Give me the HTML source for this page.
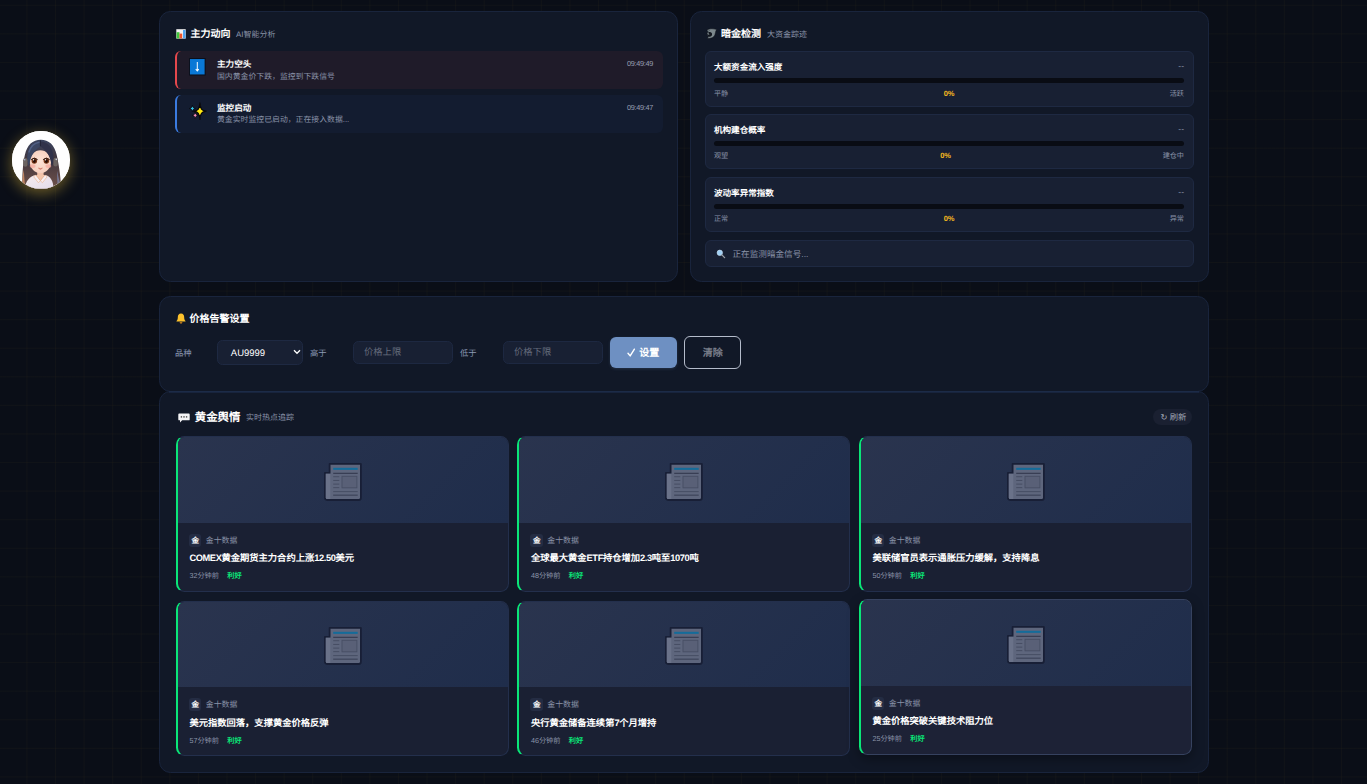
<!DOCTYPE html>
<html lang="zh-CN">
<head>
<meta charset="utf-8">
<title>Gold Monitor</title>
<style>
*{box-sizing:border-box;margin:0;padding:0}
html,body{width:1367px;height:784px;overflow:hidden}
body{
  font-family:"Liberation Sans",sans-serif;
  background-color:#0a0e17;
  background-image:
    linear-gradient(to right,rgba(255,215,60,0.028) 0.9px,transparent 0.9px),
    linear-gradient(to bottom,rgba(255,215,60,0.028) 0.9px,transparent 0.9px);
  background-size:28.592px 28.592px;
  background-position:26.45px 4.8px;
  color:#fff;position:relative;text-rendering:geometricPrecision;
}
.abs{position:absolute}
.panel{position:absolute;background:#111827;border:1px solid #19243c;border-radius:11.5px}
.ptitle{position:absolute;font-weight:700;font-size:10px;line-height:12px;color:#fff;white-space:nowrap}
.psub{position:absolute;font-size:8px;line-height:10px;color:#8a93a8;white-space:nowrap}
.t{position:absolute;white-space:nowrap}
.num{letter-spacing:-0.3px}
.lt{letter-spacing:-0.4px}
</style>
</head>
<body>

<!-- Panel 1 -->
<div class="panel" style="left:159px;top:11px;width:519px;height:271px"></div>
<svg class="abs" style="left:176px;top:28.7px" width="10" height="10" viewBox="0 0 10 10"><rect x="0.3" y="0.2" width="9.4" height="9.4" fill="#f3f3f3"/><rect x="0.6" y="3.2" width="2.9" height="6.2" fill="#3fc63f"/><rect x="3.5" y="4.6" width="2.7" height="4.8" fill="#f0562e"/><rect x="7" y="1" width="2.4" height="8.4" fill="#4da3f0"/></svg>
<div class="ptitle" style="left:190.5px;top:29px">主力动向</div>
<div class="psub" style="left:236px;top:29.5px">AI智能分析</div>

<div class="abs" style="left:175px;top:51px;width:488px;height:37.5px;background:#1f1b29;border-left:2px solid #e5484d;border-radius:6px"></div>
<svg class="abs" style="left:189.2px;top:58.3px" width="16.6" height="17.5" viewBox="0 0 17 17" preserveAspectRatio="none"><rect x="0" y="0" width="17" height="17" fill="#0b0f1a"/><rect x="1" y="1" width="15" height="15" fill="#0a78d6"/><path d="M8.5 4 V12.3 M6.9 10.9 L8.5 12.6 L10.1 10.9" stroke="#fff" stroke-width="1" fill="none"/></svg>
<div class="t" style="left:217px;top:59.4px;font-size:8.6px;line-height:11px;font-weight:700;color:#fff">主力空头</div>
<div class="t" style="left:217px;top:71.6px;font-size:7.86px;line-height:10px;color:#8a93a8">国内黄金价下跌，监控到下跌信号</div>
<div class="t num" style="right:714px;top:59px;font-size:7.3px;line-height:9px;color:#959db0">09:49:49</div>

<div class="abs" style="left:175px;top:94.5px;width:488px;height:38.5px;background:#131c30;border-left:2px solid #3b7be0;border-radius:6px"></div>
<svg class="abs" style="left:188.5px;top:102px" width="18" height="18" viewBox="0 0 18 18"><path d="M3.4 3.20 C3.71 5.38 4.45 6.17 6.50 6.5 C4.45 6.83 3.71 7.62 3.4 9.80 C3.09 7.62 2.35 6.83 0.30 6.5 C2.35 6.17 3.09 5.38 3.4 3.20Z" fill="#35c4e8" stroke="#08080c" stroke-width="0.8" stroke-linejoin="round"/><path d="M6.2 10.10 C6.51 12.28 7.25 13.07 9.30 13.4 C7.25 13.73 6.51 14.52 6.2 16.70 C5.89 14.52 5.15 13.73 3.10 13.4 C5.15 13.07 5.89 12.28 6.2 10.10Z" fill="#f08cb8" stroke="#08080c" stroke-width="0.8" stroke-linejoin="round"/><path d="M10.9 0.90 C11.27 6.71 12.76 8.70 17.10 9.2 C12.76 9.70 11.27 11.69 10.9 17.50 C10.53 11.69 9.04 9.70 4.70 9.2 C9.04 8.70 10.53 6.71 10.9 0.90Z" fill="#ffe812" stroke="#08080c" stroke-width="1.2" stroke-linejoin="round"/></svg>
<div class="t" style="left:217px;top:102.9px;font-size:8.6px;line-height:11px;font-weight:700;color:#fff">监控启动</div>
<div class="t" style="left:217px;top:114.9px;font-size:7.86px;line-height:10px;color:#8a93a8">黄金实时监控已启动，正在接入数据...</div>
<div class="t num" style="right:714px;top:102.5px;font-size:7.3px;line-height:9px;color:#959db0">09:49:47</div>

<!-- Panel 2 -->
<div class="panel" style="left:690px;top:11px;width:519px;height:271px"></div>
<svg class="abs" style="left:706px;top:27.5px" width="11" height="11.5" viewBox="0 0 11 11.5"><path d="M0.9 2.2 C2.5 0.9 5 0.5 7 0.8 C8.5 1 9.8 1.3 10.6 1.6 C10 2.6 9.6 3.6 9.4 4.7 C9.1 7.1 7.9 9 6.1 9.8 C4.6 10.4 3 10.6 1.6 10.5 C1.6 9.7 1.9 9.2 2.4 8.9 C1.8 8.2 1.5 7.3 1.6 6.4 C1.2 6 1 5.6 0.9 5.1 C1.4 4.7 1.9 4.4 2.5 4.2 C1.9 3.6 1.3 2.9 0.9 2.2Z" fill="#7c888d" stroke="#0c0f16" stroke-width="0.5" stroke-linejoin="round"/><path d="M2.5 4.3 C3.6 3.9 5 4.1 5.7 5 C6.4 6 6.1 7.600 5 8.300 C4.2 8.800 3.2 8.900 2.4 8.800 C1.8 8.100 1.600 7.300 1.700 6.400 C2.300 6.800 3 6.900 3.600 6.600 C3 6.200 2.500 5.400 2.500 4.300Z" fill="#12161e"/><circle cx="3.1" cy="2.6" r="0.45" fill="#1a1e26"/></svg>
<div class="ptitle" style="left:721px;top:29.1px">暗金检测</div>
<div class="psub" style="left:767px;top:29.5px">大资金踪迹</div>

<div class="abs" style="left:705px;top:51.4px;width:488.5px;height:55.2px;background:#182033;border:1px solid #1e2942;border-radius:6px"></div>
<div class="t" style="left:714px;top:61.7px;font-size:8.55px;line-height:11px;font-weight:700;color:#fff">大额资金流入强度</div>
<div class="t" style="right:183px;top:60.6px;font-size:8.6px;line-height:11px;color:#8a93a8">--</div>
<div class="abs" style="left:714px;top:77.7px;width:470px;height:5.5px;background:#090c14;border-radius:3px"></div>
<div class="t" style="left:714px;top:88.5px;font-size:7.14px;line-height:10px;color:#8a93a8">平静</div>
<div class="t num" style="left:943.8px;top:88.5px;font-size:7.5px;line-height:10px;color:#f5b91f;font-weight:700">0%</div>
<div class="t" style="right:183px;top:88.5px;font-size:7.14px;line-height:10px;color:#8a93a8">活跃</div>

<div class="abs" style="left:705px;top:114.3px;width:488.5px;height:55.2px;background:#182033;border:1px solid #1e2942;border-radius:6px"></div>
<div class="t" style="left:714px;top:124.6px;font-size:8.55px;line-height:11px;font-weight:700;color:#fff">机构建仓概率</div>
<div class="t" style="right:183px;top:123.5px;font-size:8.6px;line-height:11px;color:#8a93a8">--</div>
<div class="abs" style="left:714px;top:140.6px;width:470px;height:5.5px;background:#090c14;border-radius:3px"></div>
<div class="t" style="left:714px;top:151.4px;font-size:7.14px;line-height:10px;color:#8a93a8">观望</div>
<div class="t num" style="left:940.3px;top:151.4px;font-size:7.5px;line-height:10px;color:#f5b91f;font-weight:700">0%</div>
<div class="t" style="right:183px;top:151.4px;font-size:7.14px;line-height:10px;color:#8a93a8">建仓中</div>

<div class="abs" style="left:705px;top:177.3px;width:488.5px;height:55.2px;background:#182033;border:1px solid #1e2942;border-radius:6px"></div>
<div class="t" style="left:714px;top:187.6px;font-size:8.55px;line-height:11px;font-weight:700;color:#fff">波动率异常指数</div>
<div class="t" style="right:183px;top:186.5px;font-size:8.6px;line-height:11px;color:#8a93a8">--</div>
<div class="abs" style="left:714px;top:203.6px;width:470px;height:5.5px;background:#090c14;border-radius:3px"></div>
<div class="t" style="left:714px;top:214.4px;font-size:7.14px;line-height:10px;color:#8a93a8">正常</div>
<div class="t num" style="left:943.8px;top:214.4px;font-size:7.5px;line-height:10px;color:#f5b91f;font-weight:700">0%</div>
<div class="t" style="right:183px;top:214.4px;font-size:7.14px;line-height:10px;color:#8a93a8">异常</div>

<div class="abs" style="left:705px;top:240.4px;width:488.5px;height:26.5px;background:#182033;border:1px solid #1e2942;border-radius:6px"></div>
<svg class="abs" style="left:716px;top:248.5px" width="10" height="10" viewBox="0 0 10 10"><circle cx="3.8" cy="3.8" r="2.7" fill="#9fd0f5" stroke="#cfe6f8" stroke-width="0.6"/><path d="M5.9 5.9 L8.6 8.6" stroke="#9aa0a8" stroke-width="1.3" stroke-linecap="round"/></svg>
<div class="t" style="left:732.5px;top:248.5px;font-size:8.6px;line-height:11px;color:#8a93a8">正在监测暗金信号...</div>

<!-- Panel 3 -->
<div class="panel" style="left:159px;top:296px;width:1050px;height:96px"></div>
<svg class="abs" style="left:176px;top:313px" width="10" height="11" viewBox="0 0 10 11"><path d="M5 0.6 C7.3 0.6 8.2 2.4 8.2 4.4 C8.2 6.4 8.8 7.2 9.5 7.9 L9.5 8.6 L0.5 8.6 L0.5 7.9 C1.2 7.2 1.8 6.4 1.8 4.4 C1.8 2.4 2.7 0.6 5 0.6Z" fill="#fcc12c"/><path d="M3.6 9.2 H6.4 C6.3 10.1 5.7 10.5 5 10.5 C4.3 10.5 3.7 10.1 3.6 9.2Z" fill="#e8901a"/></svg>
<div class="ptitle" style="left:189.5px;top:313.5px">价格告警设置</div>

<div class="t" style="left:175px;top:348.4px;font-size:8.3px;line-height:10px;color:#8d9ab5">品种</div>
<div class="abs" style="left:217px;top:340px;width:86px;height:24.5px;background:#182033;border:1px solid #1e2942;border-radius:5.5px"></div>
<div class="t" style="left:230.8px;top:347.5px;font-size:9.5px;line-height:12px;color:#fff">AU9999</div>
<svg class="abs" style="left:292.5px;top:349px" width="8" height="6" viewBox="0 0 8 6"><path d="M1 1.2 L4 4.3 L7 1.2" stroke="#fff" stroke-width="1.3" fill="none"/></svg>
<div class="t" style="left:310px;top:348.4px;font-size:8.3px;line-height:10px;color:#8d9ab5">高于</div>
<div class="abs" style="left:353px;top:340.5px;width:100px;height:23.5px;background:#182033;border:1px solid #1d2841;border-radius:5.5px"></div>
<div class="t" style="left:364px;top:347.4px;font-size:9.3px;line-height:11px;color:#666d7d">价格上限</div>
<div class="t" style="left:460px;top:348.4px;font-size:8.3px;line-height:10px;color:#8d9ab5">低于</div>
<div class="abs" style="left:503px;top:340.5px;width:100px;height:23.5px;background:#182033;border:1px solid #1d2841;border-radius:5.5px"></div>
<div class="t" style="left:514px;top:347.4px;font-size:9.3px;line-height:11px;color:#666d7d">价格下限</div>
<div class="abs" style="left:610.3px;top:337px;width:66.7px;height:30.5px;background:#6e90c2;border-radius:6px;box-shadow:0 1px 3px rgba(110,144,194,0.22)"></div>
<svg class="abs" style="left:627.3px;top:348.3px" width="8.6" height="9.4" viewBox="0 0 9 10"><path d="M1 5.6 L3.3 8.4 L7.8 1.2" stroke="#fff" stroke-width="1.5" fill="none" stroke-linecap="round" stroke-linejoin="round"/></svg>
<div class="t" style="left:639.2px;top:347.5px;font-size:10px;line-height:12px;font-weight:700;color:#fff">设置</div>
<div class="abs" style="left:684px;top:336px;width:57px;height:33px;border:1px solid #b5bccb;border-radius:6px"></div>
<div class="t" style="left:702.7px;top:347.6px;font-size:10px;line-height:12px;color:#777c88;font-weight:700">清除</div>

<!-- Panel 4 -->
<div class="panel" style="left:159px;top:391px;width:1050px;height:382px"></div>
<svg class="abs" style="left:169px;top:390px" width="1030" height="4" viewBox="0 0 1030 4"><rect x="0" y="1.2" width="1030" height="1.4" fill="#1e2d4c"/></svg>
<svg class="abs" style="left:177.5px;top:412.5px" width="12" height="10" viewBox="0 0 12 10"><path d="M1.2 0.5 H10.8 C11.4 0.5 11.7 0.9 11.7 1.4 V6.4 C11.7 6.9 11.4 7.3 10.8 7.3 H4.2 L2 9.4 V7.3 H1.2 C0.6 7.3 0.3 6.9 0.3 6.4 V1.4 C0.3 0.9 0.6 0.5 1.2 0.5Z" fill="#f4f4f6"/><circle cx="3.4" cy="3.9" r="0.8" fill="#555"/><circle cx="6" cy="3.9" r="0.8" fill="#555"/><circle cx="8.6" cy="3.9" r="0.8" fill="#555"/></svg>
<div class="t" style="left:194.8px;top:411.2px;font-size:11.4px;line-height:15px;font-weight:700;color:#fff">黄金舆情</div>
<div class="psub" style="left:246px;top:413.2px">实时热点追踪</div>
<div class="abs" style="left:1153.3px;top:408.8px;width:38.6px;height:16.2px;background:#1a2031;border-radius:9px"></div>
<div class="t" style="left:1160.4px;top:412.3px;font-size:8.3px;line-height:10px;color:#a2a9b8">↻ 刷新</div>

<div class="abs" style="left:175.8px;top:436.4px;width:333.1px;height:155.3px;background:#1a2033;border:1px solid #232f4c;border-left:2px solid #0ae678;border-radius:8.5px;overflow:hidden">
  <div class="abs" style="left:0;top:0;width:100%;height:85.6px;background:linear-gradient(135deg,#2a344e 0%,#1f2d4b 100%)"></div>
  <svg class="abs" style="left:146.2px;top:25.4px" width="37.8" height="37.9" viewBox="0 0 37.8 37.1" preserveAspectRatio="none"><path d="M5.6 0.9 H36.9 V34 Q36.9 36.2 34.7 36.2 H3.1 Q0.9 36.2 0.9 34 V9.7 H5.6 Z" fill="#5e667d" stroke="#181f36" stroke-width="1.8" stroke-linejoin="round"/><path d="M1.8 10.600 H6.3 V35.3 H3.1 Q1.8 35.3 1.8 34 Z" fill="#6a7289"/><rect x="9.2" y="4.7" width="24.5" height="2" fill="#146c9a"/><rect x="9.2" y="9.6" width="24.5" height="0.9" fill="#2a3046"/><rect x="18" y="13" width="14.9" height="11.3" fill="#596077" stroke="#474e64" stroke-width="0.9"/><rect x="9.2" y="13" width="6.1" height="0.9" fill="#444b61"/><rect x="9.2" y="16.6" width="6.1" height="0.9" fill="#444b61"/><rect x="9.2" y="20.2" width="6.1" height="0.9" fill="#444b61"/><rect x="9.2" y="23.700" width="6.100" height="0.9" fill="#444b61"/><rect x="9.2" y="27.6" width="24.500" height="0.900" fill="#444b61"/><rect x="9.2" y="30.8" width="24.500" height="1.500" fill="#444b61"/></svg>
  <div class="abs" style="left:11.1px;top:96.7px;width:12.6px;height:12.6px;border-radius:3px;background:#242c43"></div>
  <div class="t" style="left:13.6px;top:98.7px;font-size:7.6px;line-height:9px;color:#fff;font-weight:700">金</div>
  <div class="t" style="left:28px;top:98.700px;font-size:7.9px;line-height:10px;color:#8a93a8">金十数据</div>
  <div class="t" style="left:11.6px;top:115px;font-size:9.29px;line-height:12px;color:#fff;font-weight:700"><span class="lt">COMEX</span>黄金期货主力合约上涨<span class="lt">12.50</span>美元</div>
  <div class="t" style="left:11.6px;top:134px;font-size:7.2px;line-height:9px;color:#8a93a8">32分钟前</div>
  <div class="t" style="left:49.5px;top:134px;font-size:7.2px;line-height:9px;color:#0ae678;font-weight:700">利好</div>
</div>
<div class="abs" style="left:517.3px;top:436.4px;width:333.1px;height:155.3px;background:#1a2033;border:1px solid #232f4c;border-left:2px solid #0ae678;border-radius:8.5px;overflow:hidden">
  <div class="abs" style="left:0;top:0;width:100%;height:85.6px;background:linear-gradient(135deg,#2a344e 0%,#1f2d4b 100%)"></div>
  <svg class="abs" style="left:146.2px;top:25.4px" width="37.8" height="37.9" viewBox="0 0 37.8 37.1" preserveAspectRatio="none"><path d="M5.6 0.9 H36.9 V34 Q36.9 36.2 34.7 36.2 H3.1 Q0.9 36.2 0.9 34 V9.7 H5.6 Z" fill="#5e667d" stroke="#181f36" stroke-width="1.8" stroke-linejoin="round"/><path d="M1.8 10.600 H6.3 V35.3 H3.1 Q1.8 35.3 1.8 34 Z" fill="#6a7289"/><rect x="9.2" y="4.7" width="24.5" height="2" fill="#146c9a"/><rect x="9.2" y="9.6" width="24.5" height="0.9" fill="#2a3046"/><rect x="18" y="13" width="14.9" height="11.3" fill="#596077" stroke="#474e64" stroke-width="0.9"/><rect x="9.2" y="13" width="6.1" height="0.9" fill="#444b61"/><rect x="9.2" y="16.6" width="6.1" height="0.9" fill="#444b61"/><rect x="9.2" y="20.2" width="6.1" height="0.9" fill="#444b61"/><rect x="9.2" y="23.700" width="6.100" height="0.9" fill="#444b61"/><rect x="9.2" y="27.6" width="24.500" height="0.900" fill="#444b61"/><rect x="9.2" y="30.8" width="24.500" height="1.500" fill="#444b61"/></svg>
  <div class="abs" style="left:11.1px;top:96.7px;width:12.6px;height:12.6px;border-radius:3px;background:#242c43"></div>
  <div class="t" style="left:13.6px;top:98.7px;font-size:7.6px;line-height:9px;color:#fff;font-weight:700">金</div>
  <div class="t" style="left:28px;top:98.700px;font-size:7.9px;line-height:10px;color:#8a93a8">金十数据</div>
  <div class="t" style="left:11.6px;top:115px;font-size:9.29px;line-height:12px;color:#fff;font-weight:700">全球最大黄金<span class="lt">ETF</span>持仓增加<span class="lt">2.3</span>吨至<span class="lt">1070</span>吨</div>
  <div class="t" style="left:11.6px;top:134px;font-size:7.2px;line-height:9px;color:#8a93a8">48分钟前</div>
  <div class="t" style="left:49.5px;top:134px;font-size:7.2px;line-height:9px;color:#0ae678;font-weight:700">利好</div>
</div>
<div class="abs" style="left:858.8px;top:436.4px;width:333.1px;height:155.3px;background:#1a2033;border:1px solid #232f4c;border-left:2px solid #0ae678;border-radius:8.5px;overflow:hidden">
  <div class="abs" style="left:0;top:0;width:100%;height:85.6px;background:linear-gradient(135deg,#2a344e 0%,#1f2d4b 100%)"></div>
  <svg class="abs" style="left:146.2px;top:25.4px" width="37.8" height="37.9" viewBox="0 0 37.8 37.1" preserveAspectRatio="none"><path d="M5.6 0.9 H36.9 V34 Q36.9 36.2 34.7 36.2 H3.1 Q0.9 36.2 0.9 34 V9.7 H5.6 Z" fill="#5e667d" stroke="#181f36" stroke-width="1.8" stroke-linejoin="round"/><path d="M1.8 10.600 H6.3 V35.3 H3.1 Q1.8 35.3 1.8 34 Z" fill="#6a7289"/><rect x="9.2" y="4.7" width="24.5" height="2" fill="#146c9a"/><rect x="9.2" y="9.6" width="24.5" height="0.9" fill="#2a3046"/><rect x="18" y="13" width="14.9" height="11.3" fill="#596077" stroke="#474e64" stroke-width="0.9"/><rect x="9.2" y="13" width="6.1" height="0.9" fill="#444b61"/><rect x="9.2" y="16.6" width="6.1" height="0.9" fill="#444b61"/><rect x="9.2" y="20.2" width="6.1" height="0.9" fill="#444b61"/><rect x="9.2" y="23.700" width="6.100" height="0.9" fill="#444b61"/><rect x="9.2" y="27.6" width="24.500" height="0.900" fill="#444b61"/><rect x="9.2" y="30.8" width="24.500" height="1.500" fill="#444b61"/></svg>
  <div class="abs" style="left:11.1px;top:96.7px;width:12.6px;height:12.6px;border-radius:3px;background:#242c43"></div>
  <div class="t" style="left:13.6px;top:98.7px;font-size:7.6px;line-height:9px;color:#fff;font-weight:700">金</div>
  <div class="t" style="left:28px;top:98.700px;font-size:7.9px;line-height:10px;color:#8a93a8">金十数据</div>
  <div class="t" style="left:11.6px;top:115px;font-size:9.29px;line-height:12px;color:#fff;font-weight:700">美联储官员表示通胀压力缓解，支持降息</div>
  <div class="t" style="left:11.6px;top:134px;font-size:7.2px;line-height:9px;color:#8a93a8">50分钟前</div>
  <div class="t" style="left:49.5px;top:134px;font-size:7.2px;line-height:9px;color:#0ae678;font-weight:700">利好</div>
</div>
<div class="abs" style="left:175.8px;top:600.8px;width:333.1px;height:155.3px;background:#1a2033;border:1px solid #232f4c;border-left:2px solid #0ae678;border-radius:8.5px;overflow:hidden">
  <div class="abs" style="left:0;top:0;width:100%;height:85.6px;background:linear-gradient(135deg,#2a344e 0%,#1f2d4b 100%)"></div>
  <svg class="abs" style="left:146.2px;top:25.4px" width="37.8" height="37.9" viewBox="0 0 37.8 37.1" preserveAspectRatio="none"><path d="M5.6 0.9 H36.9 V34 Q36.9 36.2 34.7 36.2 H3.1 Q0.9 36.2 0.9 34 V9.7 H5.6 Z" fill="#5e667d" stroke="#181f36" stroke-width="1.8" stroke-linejoin="round"/><path d="M1.8 10.600 H6.3 V35.3 H3.1 Q1.8 35.3 1.8 34 Z" fill="#6a7289"/><rect x="9.2" y="4.7" width="24.5" height="2" fill="#146c9a"/><rect x="9.2" y="9.6" width="24.5" height="0.9" fill="#2a3046"/><rect x="18" y="13" width="14.9" height="11.3" fill="#596077" stroke="#474e64" stroke-width="0.9"/><rect x="9.2" y="13" width="6.1" height="0.9" fill="#444b61"/><rect x="9.2" y="16.6" width="6.1" height="0.9" fill="#444b61"/><rect x="9.2" y="20.2" width="6.1" height="0.9" fill="#444b61"/><rect x="9.2" y="23.700" width="6.100" height="0.9" fill="#444b61"/><rect x="9.2" y="27.6" width="24.500" height="0.900" fill="#444b61"/><rect x="9.2" y="30.8" width="24.500" height="1.500" fill="#444b61"/></svg>
  <div class="abs" style="left:11.1px;top:96.7px;width:12.6px;height:12.6px;border-radius:3px;background:#242c43"></div>
  <div class="t" style="left:13.6px;top:98.7px;font-size:7.6px;line-height:9px;color:#fff;font-weight:700">金</div>
  <div class="t" style="left:28px;top:98.700px;font-size:7.9px;line-height:10px;color:#8a93a8">金十数据</div>
  <div class="t" style="left:11.6px;top:115px;font-size:9.29px;line-height:12px;color:#fff;font-weight:700">美元指数回落，支撑黄金价格反弹</div>
  <div class="t" style="left:11.6px;top:134px;font-size:7.2px;line-height:9px;color:#8a93a8">57分钟前</div>
  <div class="t" style="left:49.5px;top:134px;font-size:7.2px;line-height:9px;color:#0ae678;font-weight:700">利好</div>
</div>
<div class="abs" style="left:517.3px;top:600.8px;width:333.1px;height:155.3px;background:#1a2033;border:1px solid #232f4c;border-left:2px solid #0ae678;border-radius:8.5px;overflow:hidden">
  <div class="abs" style="left:0;top:0;width:100%;height:85.6px;background:linear-gradient(135deg,#2a344e 0%,#1f2d4b 100%)"></div>
  <svg class="abs" style="left:146.2px;top:25.4px" width="37.8" height="37.9" viewBox="0 0 37.8 37.1" preserveAspectRatio="none"><path d="M5.6 0.9 H36.9 V34 Q36.9 36.2 34.7 36.2 H3.1 Q0.9 36.2 0.9 34 V9.7 H5.6 Z" fill="#5e667d" stroke="#181f36" stroke-width="1.8" stroke-linejoin="round"/><path d="M1.8 10.600 H6.3 V35.3 H3.1 Q1.8 35.3 1.8 34 Z" fill="#6a7289"/><rect x="9.2" y="4.7" width="24.5" height="2" fill="#146c9a"/><rect x="9.2" y="9.6" width="24.5" height="0.9" fill="#2a3046"/><rect x="18" y="13" width="14.9" height="11.3" fill="#596077" stroke="#474e64" stroke-width="0.9"/><rect x="9.2" y="13" width="6.1" height="0.9" fill="#444b61"/><rect x="9.2" y="16.6" width="6.1" height="0.9" fill="#444b61"/><rect x="9.2" y="20.2" width="6.1" height="0.9" fill="#444b61"/><rect x="9.2" y="23.700" width="6.100" height="0.9" fill="#444b61"/><rect x="9.2" y="27.6" width="24.500" height="0.900" fill="#444b61"/><rect x="9.2" y="30.8" width="24.500" height="1.500" fill="#444b61"/></svg>
  <div class="abs" style="left:11.1px;top:96.7px;width:12.6px;height:12.6px;border-radius:3px;background:#242c43"></div>
  <div class="t" style="left:13.6px;top:98.7px;font-size:7.6px;line-height:9px;color:#fff;font-weight:700">金</div>
  <div class="t" style="left:28px;top:98.700px;font-size:7.9px;line-height:10px;color:#8a93a8">金十数据</div>
  <div class="t" style="left:11.6px;top:115px;font-size:9.29px;line-height:12px;color:#fff;font-weight:700">央行黄金储备连续第<span class="lt">7</span>个月增持</div>
  <div class="t" style="left:11.6px;top:134px;font-size:7.2px;line-height:9px;color:#8a93a8">46分钟前</div>
  <div class="t" style="left:49.5px;top:134px;font-size:7.2px;line-height:9px;color:#0ae678;font-weight:700">利好</div>
</div>
<div class="abs" style="left:858.8px;top:599.3px;width:333.1px;height:155.3px;background:#1d2236;border:1px solid #36425f;border-left:2px solid #0ae678;border-radius:8.5px;overflow:hidden;box-shadow:0 4px 12px rgba(0,0,0,0.35)">
  <div class="abs" style="left:0;top:0;width:100%;height:85.6px;background:linear-gradient(135deg,#2a344e 0%,#1f2d4b 100%)"></div>
  <svg class="abs" style="left:146.2px;top:25.4px" width="37.8" height="37.9" viewBox="0 0 37.8 37.1" preserveAspectRatio="none"><path d="M5.6 0.9 H36.9 V34 Q36.9 36.2 34.7 36.2 H3.1 Q0.9 36.2 0.9 34 V9.7 H5.6 Z" fill="#5e667d" stroke="#181f36" stroke-width="1.8" stroke-linejoin="round"/><path d="M1.8 10.600 H6.3 V35.3 H3.1 Q1.8 35.3 1.8 34 Z" fill="#6a7289"/><rect x="9.2" y="4.7" width="24.5" height="2" fill="#146c9a"/><rect x="9.2" y="9.6" width="24.5" height="0.9" fill="#2a3046"/><rect x="18" y="13" width="14.9" height="11.3" fill="#596077" stroke="#474e64" stroke-width="0.9"/><rect x="9.2" y="13" width="6.1" height="0.9" fill="#444b61"/><rect x="9.2" y="16.6" width="6.1" height="0.9" fill="#444b61"/><rect x="9.2" y="20.2" width="6.1" height="0.9" fill="#444b61"/><rect x="9.2" y="23.700" width="6.100" height="0.9" fill="#444b61"/><rect x="9.2" y="27.6" width="24.500" height="0.900" fill="#444b61"/><rect x="9.2" y="30.8" width="24.500" height="1.500" fill="#444b61"/></svg>
  <div class="abs" style="left:11.1px;top:96.7px;width:12.6px;height:12.6px;border-radius:3px;background:#242c43"></div>
  <div class="t" style="left:13.6px;top:98.7px;font-size:7.6px;line-height:9px;color:#fff;font-weight:700">金</div>
  <div class="t" style="left:28px;top:98.700px;font-size:7.9px;line-height:10px;color:#8a93a8">金十数据</div>
  <div class="t" style="left:11.6px;top:115px;font-size:9.29px;line-height:12px;color:#fff;font-weight:700">黄金价格突破关键技术阻力位</div>
  <div class="t" style="left:11.6px;top:134px;font-size:7.2px;line-height:9px;color:#8a93a8">25分钟前</div>
  <div class="t" style="left:49.5px;top:134px;font-size:7.2px;line-height:9px;color:#0ae678;font-weight:700">利好</div>
</div>
<!-- Avatar -->
<div class="abs" style="left:12.1px;top:131px;width:57.6px;height:57.6px;border-radius:50%;background:#fff;box-shadow:0 4px 14px 1px rgba(212,175,55,0.45);overflow:hidden">
<svg width="57.6" height="57.6" viewBox="0 0 58 58">
<defs>
<linearGradient id="hairg" x1="0" y1="0" x2="0" y2="1"><stop offset="0" stop-color="#39435f"/><stop offset="0.4" stop-color="#41363e"/><stop offset="1" stop-color="#70524a"/></linearGradient>
<linearGradient id="shirtg" x1="0" y1="0" x2="1" y2="1"><stop offset="0" stop-color="#f6ecee"/><stop offset="1" stop-color="#e3dcea"/></linearGradient>
<radialGradient id="faceg" cx="0.5" cy="0.45" r="0.6"><stop offset="0" stop-color="#fde3d6"/><stop offset="1" stop-color="#f6cdbb"/></radialGradient>
</defs>
<rect width="58" height="58" fill="#fefefe"/>
<path d="M10.5 58 C10 46 11 32 13 24 C15 14 21 8.7 29 8.700 C37 8.7 43 14 45 24 C46.5 31 49 44 49.5 58 Z" fill="url(#hairg)"/>
<path d="M10.6 56 C10.300 50 10.800 44 11.800 39 C12.300 45 12.500 51 13.500 56Z" fill="#e09a6c" opacity="0.75"/>
<path d="M45.5 40 C46.500 46 48 51 49.300 55 L46 56 C45.500 51 45.300 45 45.500 40Z" fill="#8a9fd2" opacity="0.55"/>
<rect x="25.4" y="39" width="6.4" height="8" fill="#f2c1a9"/>
<ellipse cx="28.6" cy="31" rx="10.7" ry="11.5" fill="url(#faceg)"/>
<path d="M28.6 10.500 C22 10.500 15.600 16 15.300 27 C15.200 30.500 16 33.500 17.200 36 C17.800 28 21 20 28.600 15.300Z" fill="#3b4663"/>
<path d="M28.6 10.500 C35 10.500 41.600 16 41.900 27 C42 30.500 41.200 33.500 40 36 C39.400 28 36 20 28.600 15.300Z" fill="#30324a"/>
<path d="M17.200 21 C19 15 23 12 27.300 11.300" stroke="#6275a0" stroke-width="1.6" fill="none" opacity="0.55" stroke-linecap="round"/>
<path d="M28.6 9.300 L28.600 15.300" stroke="#1e2132" stroke-width="0.9"/>
<rect x="11.2" y="27.3" width="4.400" height="8.800" rx="2.100" fill="#6b6360"/><rect x="41.7" y="27" width="4.400" height="8.800" rx="2.100" fill="#6b6360"/>
<circle cx="12.8" cy="29" r="0.8" fill="#a9b6d8"/><circle cx="44.6" cy="28.600" r="0.800" fill="#c9cfe0"/>
<ellipse cx="22.5" cy="30" rx="2.800" ry="3" fill="#7a3717"/><ellipse cx="34.6" cy="30" rx="2.800" ry="3" fill="#7a3717"/>
<ellipse cx="22.5" cy="30.300" rx="1.500" ry="1.800" fill="#2a0f06"/><ellipse cx="34.600" cy="30.300" rx="1.500" ry="1.800" fill="#2a0f06"/>
<circle cx="21.6" cy="28.900" r="0.750" fill="#fff"/><circle cx="33.700" cy="28.900" r="0.750" fill="#fff"/>
<path d="M19.400 28.600 Q22.500 25.900 25.600 28.600" stroke="#2b1a16" stroke-width="0.9" fill="none" stroke-linecap="round"/>
<path d="M31.500 28.600 Q34.600 25.900 37.700 28.600" stroke="#2b1a16" stroke-width="0.9" fill="none" stroke-linecap="round"/>
<ellipse cx="20.8" cy="35.3" rx="2.900" ry="1.900" fill="#f6a99d" opacity="0.75"/><ellipse cx="36.600" cy="35.300" rx="2.900" ry="1.900" fill="#f6a99d" opacity="0.75"/>
<path d="M26.500 37.300 Q28.600 40.200 30.700 37.300 Q28.600 38.200 26.500 37.300Z" fill="#d98273" stroke="#c9705e" stroke-width="0.4"/>
<path d="M13 58 C13.500 50.500 18 45.500 24 44.300 L28.600 50 L33.200 44.300 C39 45.500 41.500 50.500 42 58Z" fill="url(#shirtg)"/>
<path d="M24.300 44.300 L28.600 50.200 L32.900 44.300 Q28.600 43.300 24.300 44.300Z" fill="#f4c5aa"/>
<path d="M24 44.300 L28.600 50.200 L26.500 52 L21.800 46Z" fill="#f7eef0" stroke="#eba678" stroke-width="0.5"/>
<path d="M33.200 44.300 L28.600 50.200 L30.700 52 L35.400 46Z" fill="#f7eef0" stroke="#eba678" stroke-width="0.5"/>
</svg></div>

</body>
</html>
